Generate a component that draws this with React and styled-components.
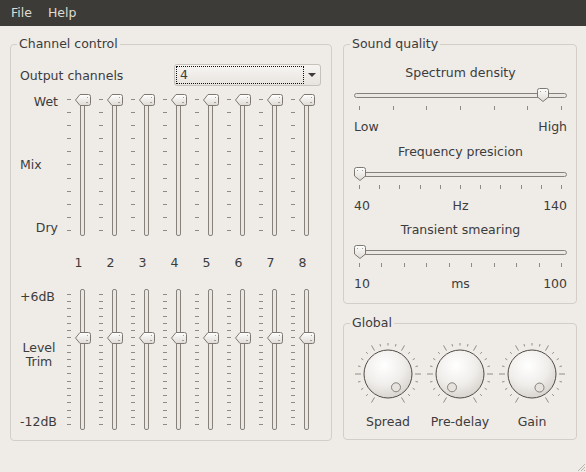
import React from 'react'
import styled, { createGlobalStyle } from 'styled-components'

const GlobalStyle = createGlobalStyle`
  html, body {
    margin: 0;
    padding: 0;
    background: #efebe7;
  }
  body {
    font-family: "DejaVu Sans", "Liberation Sans", sans-serif;
    font-size: 12.5px;
    color: #3c3c3c;
  }
`

const TOP_LABELS = ['1', '2', '3', '4', '5', '6', '7', '8']

const Window = styled.div`
  position: relative;
  width: 586px;
  height: 472px;
  overflow: hidden;
  display: flex;
  flex-direction: column;
  background: #efebe7;
`

const MenuBar = styled.div`
  height: 26px;
  flex: none;
  display: flex;
  align-items: center;
  padding-left: 3px;
  background: #3c3b37;
  color: #dfdbd2;
`

const MenuItem = styled.span`
  padding: 0 8px;
  line-height: 26px;
`

const Body = styled.div`
  display: flex;
  align-items: flex-start;
  gap: 11px;
  padding: 10px 0 0 10px;
`

const Column = styled.div`
  display: flex;
  flex-direction: column;
  gap: 11px;
  width: 234px;
`

const Group = styled.fieldset`
  margin: 0;
  min-width: 0;
  box-sizing: border-box;
  width: ${p => p.$width}px;
  padding: ${p => p.$pad};
  border: 1px solid #d3cec7;
  border-radius: 4px;
`

const Legend = styled.legend`
  margin-left: 6px;
  padding: 0 2px;
  line-height: 16px;
`

/* ---- channel control ---- */

const OutputRow = styled.div`
  display: flex;
  align-items: center;
  justify-content: space-between;
  height: 22px;
  padding: 0 10px 0 9px;
`

const Combo = styled.div`
  box-sizing: border-box;
  width: 147px;
  height: 22px;
  display: flex;
  padding: 1px 0 1px 1px;
  border: 1px solid #c6c1ba;
  border-radius: 3px;
  background: linear-gradient(#f7f5f2, #e7e4df);
`

const ComboText = styled.div`
  flex: 1;
  border: 1px dotted #111;
  padding-left: 3px;
  line-height: 16px;
`

const ComboArrow = styled.div`
  width: 16px;
  display: flex;
  align-items: center;
  justify-content: center;

  &::after {
    content: '';
    border-left: 4px solid transparent;
    border-right: 4px solid transparent;
    border-top: 4px solid #3c3c3c;
  }
`

const Mixer = styled.div`
  display: grid;
  grid-template-columns: 53px repeat(8, 32px);
  grid-template-rows: 142px 53px 141px;
  margin-top: 8px;
`

const LabelStack = styled.div`
  display: flex;
  flex-direction: column;
  justify-content: space-between;
  padding: 0 6px 0 9px;
  line-height: 16px;
`

const SideLabel = styled.div`
  text-align: ${p => p.$align || 'left'};
  line-height: ${p => p.$lh || 16}px;
  margin-bottom: ${p => p.$mb || 0}px;
`

const Num = styled.div`
  display: flex;
  align-items: center;
  justify-content: center;
  padding-right: 3px;
`

const VCell = styled.div`
  display: flex;
  height: 100%;
`

const VTicks = styled.div`
  width: 4px;
  margin-left: 3px;
  padding: 5px 0;
  display: flex;
  flex-direction: column;
  justify-content: space-between;
  box-sizing: border-box;
`

const VTick = styled.div`
  height: 1px;
  background: #8f8a84;
`

const VTrack = styled.div`
  position: relative;
  box-sizing: border-box;
  width: 5px;
  margin-left: 9px;
  border: 1px solid #86817b;
  border-radius: 2px;
  background: #ebe8e3;
`

const VKnob = styled.svg`
  position: absolute;
  left: -6px;
  top: ${p => p.$top}px;
`

/* ---- sound quality ---- */

const SoundBody = styled.div`
  padding: 1px 9px 0 10px;
`

const Block = styled.div`
  display: flex;
  flex-direction: column;
  margin-top: ${p => (p.$first ? 0 : 8.5)}px;
`

const BlockTitle = styled.div`
  text-align: center;
  line-height: 16px;
`

const HRow = styled.div`
  position: relative;
  height: 14px;
  margin-top: 7px;
`

const HTrack = styled.div`
  box-sizing: border-box;
  height: 5px;
  margin-top: 5px;
  border: 1px solid #86817b;
  border-radius: 3px;
  background: #ebe8e3;
`

const HKnob = styled.svg`
  position: absolute;
  top: 0;
  left: ${p => p.$left}px;
`

const HTicks = styled.div`
  display: flex;
  justify-content: space-between;
  height: 4px;
  margin-top: 4px;
  padding: 0 5px 0 5px;
`

const HTick = styled.div`
  width: 1px;
  background: #8f8a84;
`

const Values = styled.div`
  display: grid;
  grid-template-columns: 1fr auto 1fr;
  margin-top: 9px;
  line-height: 16px;

  span:last-child {
    text-align: right;
  }
`

/* ---- global ---- */

const KnobRow = styled.div`
  display: grid;
  grid-template-columns: repeat(3, 72px);
  justify-content: center;
`

const KnobCell = styled.div`
  display: flex;
  flex-direction: column;
  align-items: center;
`

const KnobCaption = styled.div`
  margin-top: 5.5px;
  line-height: 16px;
`

const Grip = styled.svg`
  position: absolute;
  right: 0;
  bottom: 0;
`

function VHandle({ top }) {
  return (
    <VKnob $top={top} width="16" height="12" viewBox="0 0 16 12">
      <defs>
        <linearGradient id="vh-grad" x1="0" y1="0" x2="0" y2="1">
          <stop offset="0" stopColor="#ffffff" />
          <stop offset="1" stopColor="#dedad4" />
        </linearGradient>
      </defs>
      <path d="M0.5 6 L5 0.5 H13.5 Q15.5 0.5 15.5 2.5 V9.5 Q15.5 11.5 13.5 11.5 H5 Z" fill="url(#vh-grad)" stroke="#7d7872" />
      <rect x="12" y="3" width="1" height="1" fill="#a29d97" />
      <rect x="12" y="8" width="1" height="1" fill="#a29d97" />
      <rect x="11" y="8" width="1" height="1" fill="#a29d97" />
    </VKnob>
  )
}

function VSlider({ ticks, pos, height }) {
  return (
    <VCell>
      <VTicks>
        {Array.from({ length: ticks }, (_, i) => <VTick key={i} />)}
      </VTicks>
      <VTrack>
        <VHandle top={pos * (height - 11) - 1} />
      </VTrack>
    </VCell>
  )
}

function HSlider({ title, ticks, pos, values, first }) {
  const travel = 212 - 12
  return (
    <Block $first={first}>
      <BlockTitle>{title}</BlockTitle>
      <HRow>
        <HTrack />
        <HKnob $left={pos * travel} width="12" height="14" viewBox="0 0 12 14">
          <defs>
            <linearGradient id="hh-grad" x1="0" y1="0" x2="0" y2="1">
              <stop offset="0" stopColor="#ffffff" />
              <stop offset="1" stopColor="#dedad4" />
            </linearGradient>
          </defs>
          <path d="M0.5 2.5 Q0.5 0.5 2.5 0.5 H9.5 Q11.5 0.5 11.5 2.5 V9 L6 13.5 L0.5 9 Z" fill="url(#hh-grad)" stroke="#7d7872" />
          <rect x="3" y="3" width="1" height="1" fill="#a29d97" />
          <rect x="8" y="3" width="1" height="1" fill="#a29d97" />
        </HKnob>
      </HRow>
      <HTicks>
        {Array.from({ length: ticks }, (_, i) => <HTick key={i} />)}
      </HTicks>
      <Values>
        <span>{values[0]}</span>
        <span>{values[1]}</span>
        <span>{values[2]}</span>
      </Values>
    </Block>
  )
}

function Dial({ angle }) {
  const c = 34
  const marks = Array.from({ length: 21 }, (_, k) => {
    const a = ((-150 + 15 * k) * Math.PI) / 180
    const major = k % 4 === 0
    const r1 = major ? 27 : 28.5
    const r2 = major ? 33 : 31
    return (
      <line
        key={k}
        x1={c + r1 * Math.sin(a)}
        y1={c - r1 * Math.cos(a)}
        x2={c + r2 * Math.sin(a)}
        y2={c - r2 * Math.cos(a)}
        stroke="#928d87"
        strokeWidth="1"
      />
    )
  })
  const ia = (angle * Math.PI) / 180
  return (
    <svg width="68" height="68" viewBox="0 0 68 68">
      <defs>
        <radialGradient id="dial-grad" cx="0.42" cy="0.32" r="0.75">
          <stop offset="0" stopColor="#ffffff" />
          <stop offset="0.55" stopColor="#f0eeeb" />
          <stop offset="1" stopColor="#d3cfc9" />
        </radialGradient>
      </defs>
      {marks}
      <circle cx={c} cy={c} r="24" fill="url(#dial-grad)" stroke="#4f4b47" strokeWidth="1" />
      <circle
        cx={c + 15.5 * Math.sin(ia)}
        cy={c - 15.5 * Math.cos(ia)}
        r="4.5"
        fill="#e6e3df"
        stroke="#86817b"
        strokeWidth="1"
      />
    </svg>
  )
}

export default function App() {
  return (
    <Window>
      <GlobalStyle />
      <MenuBar>
        <MenuItem>File</MenuItem>
        <MenuItem>Help</MenuItem>
      </MenuBar>
      <Body>
        <Group $width={322} $pad="12px 0 10px 0">
          <Legend>Channel control</Legend>
          <OutputRow>
            <span>Output channels</span>
            <Combo>
              <ComboText>4</ComboText>
              <ComboArrow />
            </Combo>
          </OutputRow>
          <Mixer>
            <LabelStack>
              <SideLabel $align="right">Wet</SideLabel>
              <SideLabel>Mix</SideLabel>
              <SideLabel $align="right">Dry</SideLabel>
            </LabelStack>
            {TOP_LABELS.map(n => <VSlider key={'t' + n} ticks={11} pos={0} height={142} />)}
            <div />
            {TOP_LABELS.map(n => <Num key={'n' + n}>{n}</Num>)}
            <LabelStack>
              <SideLabel>+6dB</SideLabel>
              <SideLabel $align="center" $lh={14} $mb={10}>Level<br />Trim</SideLabel>
              <SideLabel>-12dB</SideLabel>
            </LabelStack>
            {TOP_LABELS.map(n => <VSlider key={'b' + n} ticks={19} pos={1 / 3} height={141} />)}
          </Mixer>
        </Group>

        <Column>
          <Group $width={234} $pad="12px 0 11px 0">
            <Legend>Sound quality</Legend>
            <SoundBody>
              <HSlider first title="Spectrum density" ticks={7} pos={0.915} values={['Low', '', 'High']} />
              <HSlider title="Frequency presicion" ticks={11} pos={0} values={['40', 'Hz', '140']} />
              <HSlider title="Transient smearing" ticks={10} pos={0} values={['10', 'ms', '100']} />
            </SoundBody>
          </Group>
          <Group $width={234} $pad="9px 0 9.5px 0">
            <Legend>Global</Legend>
            <KnobRow>
              <KnobCell>
                <Dial angle={149} />
                <KnobCaption>Spread</KnobCaption>
              </KnobCell>
              <KnobCell>
                <Dial angle={-149} />
                <KnobCaption>Pre-delay</KnobCaption>
              </KnobCell>
              <KnobCell>
                <Dial angle={151} />
                <KnobCaption>Gain</KnobCaption>
              </KnobCell>
            </KnobRow>
          </Group>
        </Column>
      </Body>
      <Grip width="11" height="11" viewBox="0 0 11 11">
        <path d="M10 3 L3 10 M10 6 L6 10 M10 9 L9 10" stroke="#b9b4ad" strokeWidth="1" />
      </Grip>
    </Window>
  )
}
